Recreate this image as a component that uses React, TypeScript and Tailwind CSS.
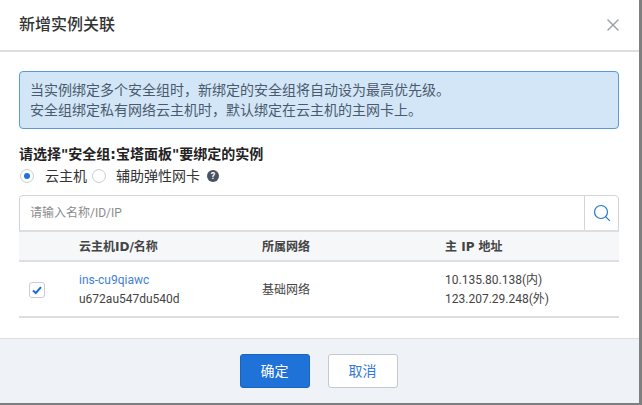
import React from 'react';
import { X } from 'lucide-react';

const App: React.FC = () => {
  return (
    <div className="w-[642px] h-[405px] overflow-hidden bg-[#7f7f7f] font-['Roboto','Noto_Sans_CJK_SC',sans-serif]">
      <div className="w-[639px] h-[403px] bg-white flex flex-col">
        {/* header */}
        <div className="h-[52px] shrink-0 border-b-2 border-[#dedede] flex items-center justify-between pl-[19px] pr-[16px]">
          <h3 className="text-[16px] font-medium leading-[50px] text-[#333]">新增实例关联</h3>
          <X size={20} strokeWidth={1.7} className="text-[#98a0a8]" />
        </div>

        {/* body */}
        <div className="flex-1 pl-[19px] pr-[20px] pt-[19px]">
          <div className="h-[58px] border border-[#5b9bd5] rounded-sm bg-[#d2e6f8] px-[10px] py-[8px] text-[14px] leading-[20px] text-[#4b5a6b]">
            <p>当实例绑定多个安全组时，新绑定的安全组将自动设为最高优先级。</p>
            <p>安全组绑定私有网络云主机时，默认绑定在云主机的主网卡上。</p>
          </div>

          <p className="mt-[15px] text-[14px] leading-[20px] font-bold text-[#222] font-['DejaVu_Sans','Noto_Sans_CJK_SC',sans-serif]">请选择"安全组:宝塔面板"要绑定的实例</p>
          <div className="h-[22px] mt-px flex items-center text-[14px] text-[#333]">
            <span className="ml-[1px] w-[14px] h-[14px] rounded-full border border-[#c8cdd6] flex items-center justify-center">
              <span className="w-[6px] h-[6px] rounded-full bg-[#1f72d8]" />
            </span>
            <span className="ml-[11px]">云主机</span>
            <span className="ml-[5px] w-[14px] h-[14px] rounded-full border border-[#c8cdd6]" />
            <span className="ml-[10px]">辅助弹性网卡</span>
            <span className="ml-[7px] w-[12px] h-[12px] rounded-full bg-[#4a5160] text-white text-[9px] leading-[12px] font-bold text-center">?</span>
          </div>

          {/* search */}
          <div className="mt-[8px] h-[36px] border border-[#d4d4d4] rounded-t-sm flex">
            <div className="flex-1 pl-[10px] text-[12px] leading-[34px] text-[#8c8c8c]">请输入名称/ID/IP</div>
            <div className="w-[34px] border-l border-[#d4d4d4] flex items-center justify-center">
              <svg width="18" height="18" viewBox="0 0 18 18" fill="none" stroke="#1f78d8" strokeWidth="1.2">
                <circle cx="8" cy="8" r="6.5" />
                <path d="M12.7 12.7 L16.8 16.8" />
              </svg>
            </div>
          </div>

          {/* table */}
          <div className="text-[#444]">
            <div className="h-[32px] -mt-px pt-[2px] bg-[#f5f7f9] border-y-2 border-t-[#dcdee2] border-b-[#dcdee2] grid grid-cols-[60px_183px_183px_1fr] items-center text-[12px] font-bold font-['DejaVu_Sans','Noto_Sans_CJK_SC',sans-serif]">
              <span />
              <span>云主机ID/名称</span>
              <span>所属网络</span>
              <span>主 IP 地址</span>
            </div>
            <div className="h-[56px] pt-[2px] border-b-2 border-[#dcdee2] grid grid-cols-[60px_183px_183px_1fr] items-center text-[12px] leading-[19px]">
              <span className="pl-[10px]">
                <span className="w-[16px] h-[16px] rounded-[3px] border border-[#c8cdd6] flex items-center justify-center">
                  <svg width="10" height="9" viewBox="0 0 10 9" fill="none" stroke="#1a6fd4" strokeWidth="2">
                    <path d="M1 4.5 L3.8 7 L9 1.2" />
                  </svg>
                </span>
              </span>
              <div>
                <p className="text-[#3f7fd8]">ins-cu9qiawc</p>
                <p>u672au547du540d</p>
              </div>
              <span>基础网络</span>
              <div>
                <p>10.135.80.138(内)</p>
                <p>123.207.29.248(外)</p>
              </div>
            </div>
          </div>
        </div>

        {/* footer */}
        <div className="h-[65px] shrink-0 border-t border-[#dcdee2] bg-[#eff3f7] flex items-center justify-center gap-[18px] pr-[2px] text-[14px]">
          <button className="w-[70px] h-[34px] rounded-[3px] bg-[#1f72d8] border border-[#1a64c0] text-white">确定</button>
          <button className="w-[70px] h-[34px] rounded-[3px] bg-white border border-[#c4c8cf] text-[#2f7ad9]">取消</button>
        </div>
      </div>
    </div>
  );
};

export default App;
